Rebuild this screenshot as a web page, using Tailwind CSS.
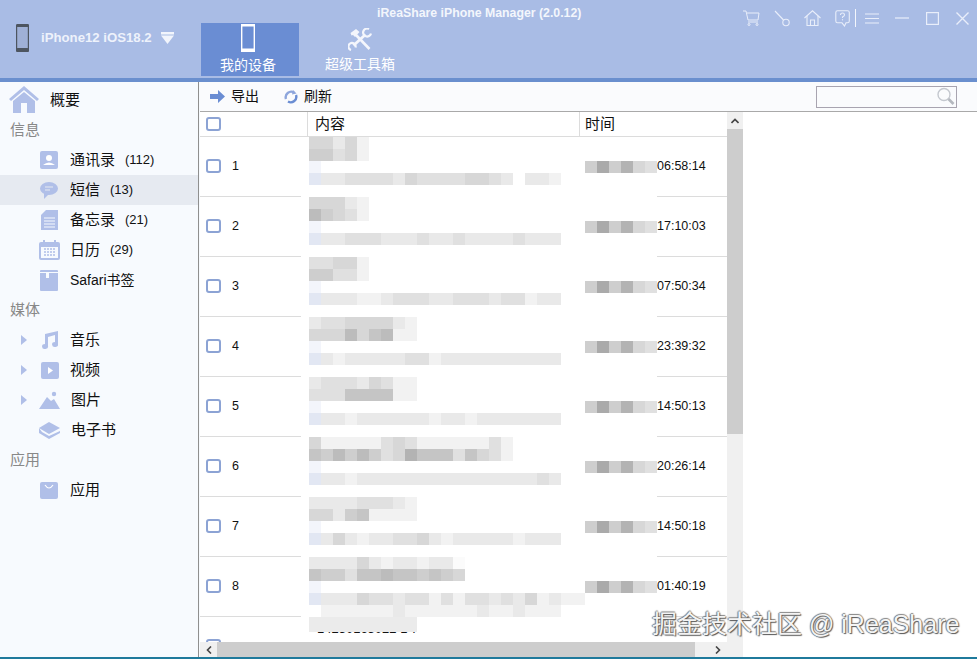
<!DOCTYPE html>
<html lang="zh">
<head>
    <meta charset="UTF-8">
    <meta name="viewport" content="width=device-width, initial-scale=1.0">
    <title>iReaShare iPhone Manager</title>
    <script src="https://cdn.jsdelivr.net/npm/@tailwindcss/browser@4"></script>
</head>
<body class="bg-white">
<div class="relative w-[977px] h-[659px] overflow-hidden flex flex-col bg-white text-[#111] font-['Liberation_Sans','Noto_Sans_CJK_SC',sans-serif]">

    <!-- Top bar -->
    <header class="relative h-[78px] shrink-0 flex bg-[#a9bce5] text-white">
        <div class="w-[201px] flex items-start pt-[24px] pl-[16px]">
            <svg width="13" height="28" viewBox="0 0 13 28"><rect x="0.5" y="0.5" width="12" height="27" rx="2" fill="#9fb0d6" stroke="#4d5560" stroke-width="1.4"/><rect x="0" y="0" width="13" height="3" rx="1.5" fill="#4d5560"/><rect x="0" y="24" width="13" height="4" rx="1.5" fill="#4d5560"/></svg>
            <span class="ml-[12px] mt-[6px] text-[13.2px] leading-4 font-bold text-[#eef2fb] whitespace-nowrap">iPhone12 iOS18.2</span>
            <svg class="ml-[9px] mt-[8px] shrink-0" width="13" height="12" viewBox="0 0 13 12"><rect x="0" y="0" width="13" height="2.5" fill="#f2f5fc"/><polygon points="0,3.5 13,3.5 6.5,12" fill="#f2f5fc"/></svg>
        </div>
        <div class="w-[98px] h-[53px] mt-[23px] bg-[#6a8dd3] flex flex-col items-center pr-[4px]">
            <svg class="mt-[1px]" width="14" height="28" viewBox="0 0 14 28"><rect x="0.7" y="0.7" width="12.6" height="26.6" rx="1.5" fill="none" stroke="#fff" stroke-width="1.4"/><rect x="0" y="0" width="14" height="2.5" fill="#fff"/><rect x="0" y="24.5" width="14" height="3.5" fill="#fff"/></svg>
            <span class="mt-[5px] text-[14px] leading-[16px]">我的设备</span>
        </div>
        <div class="w-[110px] h-[53px] mt-[23px] flex flex-col items-center pl-[12px]">
            <svg class="mt-[5px]" width="24" height="23" viewBox="0 0 24 23" fill="none" stroke="#f4f6fc"><path d="M2.5 5 L8 1 L11.5 4 L7 9 L5 7 L3.5 7.5 Z" fill="#f4f6fc" stroke="none"/><path d="M8 7 L21.5 21" stroke-width="2.6"/><path d="M17.5 6.5 L5.5 17.5" stroke-width="2.8"/><path d="M21 1 A4 4 0 1 0 23 5.5" stroke-width="2.2"/><path d="M3 22 A3.6 3.6 0 1 1 7.5 19.5" stroke-width="2.2"/></svg>
            <span class="mt-[5px] text-[14px] leading-[16px]">超级工具箱</span>
        </div>
        <div class="absolute top-[6px] left-[377px] text-[12.3px] leading-[14px] font-bold text-[#f3f6fc] whitespace-nowrap">iReaShare iPhone Manager (2.0.12)</div>

        <div class="absolute top-[9px] right-[8px] flex items-center h-[18px] text-[#e9eefa]">
            <svg width="17" height="16" viewBox="0 0 17 16" fill="none" stroke="currentColor" stroke-width="1"><path d="M0 1 H3 L5 10 H15 L16 3 H4"/><path d="M5 12 H15"/><circle cx="6" cy="14.5" r="1"/><circle cx="14" cy="14.5" r="1"/></svg>
            <svg class="ml-[14px]" width="17" height="17" viewBox="0 0 17 17" fill="none" stroke="currentColor" stroke-width="1.1"><path d="M1 1 L9.5 10"/><circle cx="12" cy="12.5" r="3.2"/></svg>
            <svg class="ml-[13px]" width="17" height="16" viewBox="0 0 17 16" fill="none" stroke="currentColor" stroke-width="1.1"><path d="M0.5 8 L8.5 0.8 L16.5 8"/><path d="M3 6 V15.5 H14 V6"/><path d="M6.5 15.5 V10 H10.5 V15.5"/></svg>
            <svg class="ml-[14px]" width="15" height="17" viewBox="0 0 15 17" fill="none" stroke="currentColor" stroke-width="1.1"><path d="M2.5 0.8 H12.5 Q14.3 0.8 14.3 2.5 V11 Q14.3 12.8 12.5 12.8 H11 L9.5 16 L7 12.8 H2.5 Q0.8 12.8 0.8 11 V2.5 Q0.8 0.8 2.5 0.8 Z"/><path d="M5.5 5 Q5.5 3 7.5 3 Q9.5 3 9.5 5 Q9.5 6 7.5 7 V8"/><path d="M7.5 9.2 V10.4"/></svg>
            <div class="ml-[5px] w-px h-[18px] bg-[#f3f6fc]"></div>
            <svg class="ml-[9px]" width="14" height="11" viewBox="0 0 14 11" stroke="currentColor" stroke-width="1"><path d="M0 1 H14 M0 5.5 H14 M0 10 H14"/></svg>
            <svg class="ml-[16px]" width="14" height="2" viewBox="0 0 14 2" stroke="currentColor" stroke-width="1.2"><path d="M0 1 H14"/></svg>
            <svg class="ml-[17px]" width="13" height="13" viewBox="0 0 13 13" fill="none" stroke="currentColor" stroke-width="1.2"><rect x="0.6" y="0.6" width="11.8" height="11.8"/></svg>
            <svg class="ml-[17px]" width="13" height="13" viewBox="0 0 13 13" stroke="currentColor" stroke-width="1.4"><path d="M0.5 0.5 L12.5 12.5 M12.5 0.5 L0.5 12.5"/></svg>
        </div>
    </header>
    <div class="h-[4px] shrink-0 bg-[#6a8fce]"></div>

    <div class="flex-1 flex min-h-0">
        <!-- Sidebar -->
        <aside class="w-[200px] shrink-0 bg-[#f7fafe] text-[14px]">
            <div class="w-[199px] h-full border-r border-[#8f8f8f] pt-[3px]">
            <div class="h-[30px] flex items-center pl-[9px]">
                <svg width="30" height="28" viewBox="0 0 30 28" fill="#b0bfe8"><path d="M15 0 L30 13 L28 15 L15 4 L2 15 L0 13 Z"/><path d="M4 15 L15 6 L26 15 V27 H18 V17 H12 V27 H4 Z"/></svg>
                <span class="ml-[11px] text-[15px]">概要</span>
            </div>
            <div class="h-[30px] flex items-center pl-[10px] text-[15px] text-[#888]">信息</div>
            <div class="h-[30px] flex items-center pl-[40px]">
                <svg width="18" height="18" viewBox="0 0 18 18"><rect width="18" height="18" rx="2" fill="#b0bfe8"/><circle cx="9" cy="7" r="3" fill="#fff"/><path d="M3 14 Q9 9 15 14 Z" fill="#fff"/></svg>
                <span class="ml-[12px] text-[15px]">通讯录</span><span class="ml-[10px] text-[13px]">(112)</span>
            </div>
            <div class="h-[30px] flex items-center pl-[40px] bg-[#e6eaf1]">
                <svg width="18" height="18" viewBox="0 0 18 18"><ellipse cx="9" cy="7.5" rx="9" ry="6.5" fill="#b0bfe8"/><path d="M4 12 L4 18 L9 13 Z" fill="#b0bfe8"/><path d="M5 6 H13 M5 9 H10" stroke="#e6eaf1" stroke-width="1"/></svg>
                <span class="ml-[12px] text-[15px]">短信</span><span class="ml-[10px] text-[13px]">(13)</span>
            </div>
            <div class="h-[30px] flex items-center pl-[41px]">
                <svg width="17" height="20" viewBox="0 0 17 20"><path d="M5 0 H17 V20 H0 V5 Z" fill="#b0bfe8"/><path d="M3 8 H14 M3 11 H14 M3 14 H14 M3 17 H14" stroke="#f7fafe" stroke-width="1"/></svg>
                <span class="ml-[12px] text-[15px]">备忘录</span><span class="ml-[10px] text-[13px]">(21)</span>
            </div>
            <div class="h-[30px] flex items-center pl-[39px]">
                <svg width="21" height="20" viewBox="0 0 21 20"><rect y="2" width="21" height="18" rx="2" fill="#b0bfe8"/><rect x="2" y="7" width="17" height="11" fill="#f7fafe"/><rect x="4" y="0" width="2" height="4" fill="#b0bfe8"/><rect x="15" y="0" width="2" height="4" fill="#b0bfe8"/><path d="M5 9 H16 M5 12 H16 M5 15 H16" stroke="#b0bfe8" stroke-width="1.6" stroke-dasharray="2 1"/></svg>
                <span class="ml-[10px] text-[15px]">日历</span><span class="ml-[10px] text-[13px]">(29)</span>
            </div>
            <div class="h-[30px] flex items-center pl-[40px]">
                <svg width="18" height="21" viewBox="0 0 18 21"><rect width="18" height="21" rx="1" fill="#b0bfe8"/><path d="M0 2 H18 V3 H9 V8 H6 V3 H0 Z" fill="#f7fafe"/></svg>
                <span class="ml-[12px] text-[14px]">Safari书签</span>
            </div>
            <div class="h-[30px] flex items-center pl-[10px] text-[15px] text-[#888]">媒体</div>
            <div class="h-[30px] flex items-center pl-[21px]">
                <svg width="6" height="10" viewBox="0 0 6 10"><path d="M0 0 L6 5 L0 10 Z" fill="#b0bfe8"/></svg>
                <svg class="ml-[13px]" width="18" height="18" viewBox="0 0 18 18" fill="#b0bfe8"><path d="M5 3 L18 0 V13 A3 2.5 0 1 1 15 11 V4 L8 6 V15 A3 2.5 0 1 1 5 13 Z"/></svg>
                <span class="ml-[12px] text-[15px]">音乐</span>
            </div>
            <div class="h-[30px] flex items-center pl-[21px]">
                <svg width="6" height="10" viewBox="0 0 6 10"><path d="M0 0 L6 5 L0 10 Z" fill="#b0bfe8"/></svg>
                <svg class="ml-[14px]" width="18" height="17" viewBox="0 0 18 17"><rect width="18" height="17" rx="2" fill="#b0bfe8"/><path d="M7 5 L12 8.5 L7 12 Z" fill="#fff"/></svg>
                <span class="ml-[11px] text-[15px]">视频</span>
            </div>
            <div class="h-[30px] flex items-center pl-[21px]">
                <svg width="6" height="10" viewBox="0 0 6 10"><path d="M0 0 L6 5 L0 10 Z" fill="#b0bfe8"/></svg>
                <svg class="ml-[12px]" width="21" height="18" viewBox="0 0 21 18" fill="#b0bfe8"><circle cx="15" cy="3" r="2.2"/><path d="M0 18 L8 6 L12 10 L15 8 L21 18 Z"/></svg>
                <span class="ml-[11px] text-[15px]">图片</span>
            </div>
            <div class="h-[30px] flex items-center pl-[39px]">
                <svg width="21" height="17" viewBox="0 0 21 17"><path d="M0 6 L10 0 L21 6 L10 12 Z" fill="#b0bfe8"/><path d="M0 6 V11 L10 17 L21 11 V9 L10 14 L3 10 Z" fill="#b0bfe8"/></svg>
                <span class="ml-[11px] text-[15px]">电子书</span>
            </div>
            <div class="h-[30px] flex items-center pl-[10px] text-[15px] text-[#888]">应用</div>
            <div class="h-[30px] flex items-center pl-[40px]">
                <svg width="18" height="17" viewBox="0 0 18 17"><rect width="18" height="17" rx="2" fill="#b0bfe8"/><path d="M5 3 Q9 9 13 3" fill="none" stroke="#fff" stroke-width="1.2"/></svg>
                <span class="ml-[12px] text-[15px]">应用</span>
            </div>
            </div>
        </aside>

        <main class="flex-1 flex flex-col min-w-0">
            <!-- Toolbar -->
            <div class="h-[30px] shrink-0 flex items-center bg-[#fafbfd] border-b border-[#a9a9a9] text-[14px]">
                <svg class="ml-[10px]" width="15" height="13" viewBox="0 0 15 13"><path d="M0 4 H8 V0 L15 6.5 L8 13 V9 H0 Z" fill="#6a8dd3"/></svg>
                <span class="ml-[6px]">导出</span>
                <svg class="ml-[25px]" width="14" height="14" viewBox="0 0 14 14" fill="none" stroke-width="2.4"><path d="M2 9 A5.5 5.5 0 0 1 10 2.5" stroke="#8ea6dc"/><path d="M12 5 A5.5 5.5 0 0 1 4 11.5" stroke="#6a8dd3"/><path d="M9 0 L12.5 3.5 L8 4.5 Z" fill="#8ea6dc" stroke="none"/></svg>
                <span class="ml-[6px]">刷新</span>
                <div class="ml-auto mr-[20px] w-[141px] h-[22px] border border-[#a8a4b0] flex items-center justify-end pr-[1px]">
                    <svg width="19" height="19" viewBox="0 0 19 19" fill="none"><circle cx="8" cy="7.5" r="6" stroke="#c4c8cf" stroke-width="1.4"/><path d="M12.5 12 L17.5 17" stroke="#b4b8bf" stroke-width="2.6"/></svg>
                </div>
            </div>

            <div class="flex-1 flex min-h-0">
                <div class="w-[543px] flex flex-col min-h-0">
                    <div class="flex-1 flex min-h-0">
                        <div class="w-[527px] flex flex-col min-h-0 overflow-hidden">
                            <div class="h-[25px] shrink-0 flex border-b border-[#dcdcdc] text-[15px]">
                                <div class="w-[108px] border-r border-[#dcdcdc] flex items-center pl-[6px]">
                                    <span class="w-[15px] h-[14px] rounded-[3px] border-2 border-[#8ca3d4] bg-white"></span>
                                </div>
                                <div class="w-[272px] border-r border-[#dcdcdc] flex items-center pl-[7px]">内容</div>
                                <div class="flex items-center pl-[5px]">时间</div>
                            </div>
                            <div id="rows" class="flex-1 min-h-0 overflow-hidden"></div>
                        </div>
                        <div class="w-[16px] bg-[#f0f0f0] flex flex-col items-center">
                            <div class="h-[17px] flex items-center justify-center">
                                <svg width="8" height="6" viewBox="0 0 8 6" fill="none" stroke="#444" stroke-width="1.6"><path d="M0.5 5 L4 1.5 L7.5 5"/></svg>
                            </div>
                            <div class="w-full h-[305px] bg-[#cdcdcd]"></div>
                        </div>
                    </div>
                    <div class="h-[15px] shrink-0 bg-[#f0f0f0] flex items-center">
                        <div class="w-[17px] h-full flex items-center justify-center">
                            <svg width="6" height="8" viewBox="0 0 6 8" fill="none" stroke="#444" stroke-width="1.6"><path d="M5 0.5 L1.5 4 L5 7.5"/></svg>
                        </div>
                        <div class="w-[478px] h-full bg-[#cdcdcd]"></div>
                        <div class="ml-[20px]">
                            <svg width="6" height="8" viewBox="0 0 6 8" fill="none" stroke="#444" stroke-width="1.6"><path d="M1 0.5 L4.5 4 L1 7.5"/></svg>
                        </div>
                    </div>
                </div>
                <div class="flex-1 bg-white"></div>
            </div>
        </main>
    </div>
    <div class="h-[2px] shrink-0 bg-[#1f7a9c]"></div>

    <!-- Watermark -->
    <div class="absolute left-[652px] top-[609px] text-[25px] leading-[30px] text-[#f4f4f4] whitespace-nowrap [text-shadow:1px_1px_1px_#555,-1px_0_1px_#777,0_-1px_1px_#888]">掘金技术社区 @ iReaShare</div>
</div>

<script>
    // digit = grey level of one 12px block, b/f = bluish tint, . = nothing
    const messages = [
        { t: '06:58:14', s: '404156', lines: ['55758', '44658', 'f', 'b7766667566665567.778'] },
        { t: '17:10:03', s: '404156', lines: ['55578', '24568', 'f', 'b77666777677677776777'] },
        { t: '07:50:34', s: '404156', lines: ['66558', '44668', 'f', 'b77788766677666766877'] },
        { t: '23:39:32', s: '404156', lines: ['766555578', '555253288', 'f', 'b78777776687777777777'] },
        { t: '14:50:13', s: '404156', lines: ['766675688', '666333388', 'f', 'b77877777787787777777'] },
        { t: '20:26:14', s: '404156', lines: ['58888865688888868', '34242465133363568', 'f', 'b77877777777777777767'] },
        { t: '14:50:18', s: '404156', lines: ['777766678', '557438888', 'f', 'b75787766578777778777'] },
        { t: '01:40:19', s: '404156', lines: ['7777578778779', '3446332334345', 'f', 'b7775667668686676758788', '.88888878888887887888', '666556666788'] },
    ];
    const shade = (c) => {
        if (c === 'b') return '#e2e7f3';
        if (c === 'f') return '#f3f5fb';
        if (c === '.') return 'transparent';
        const v = 170 + Number(c) * 9;
        return `rgb(${v},${v},${v})`;
    };
    const blockRow = (line) => [...line].map(c =>
        `<div class="w-[12px] h-[12px] shrink-0" style="background:${shade(c)}"></div>`).join('');

    const rowsEl = document.getElementById('rows');
    rowsEl.innerHTML = messages.map((m, i) => `
        <div class="h-[60px] flex overflow-hidden">
            <div class="w-[101px] shrink-0 border-b border-[#dcdcdc] flex items-center pl-[6px] text-[12.5px]">
                <span class="w-[15px] h-[14px] rounded-[3px] border-2 border-[#8ca3d4] bg-white mb-[2px]"></span>
                <span class="ml-[11px]">${i + 1}</span>
            </div>
            <div class="w-[356px] shrink-0 flex items-center">
                <div class="ml-[8px] w-[276px] h-full flex flex-col">
                    ${m.lines.map(l => `<div class="flex">${blockRow(l)}</div>`).join('')}
                </div>
                <div class="flex">${blockRow(m.s)}</div>
            </div>
            <div class="flex-1 border-b border-[#dcdcdc] flex items-center pb-[1px] text-[12.5px]">${m.t}</div>
        </div>`).join('') + `
        <div class="h-[25px] flex overflow-hidden">
            <div class="w-[101px] shrink-0 flex items-start pl-[6px] pt-[22px]">
                <span class="w-[15px] h-[14px] shrink-0 rounded-[3px] border-2 border-[#8ca3d4] bg-white"></span>
            </div>
            <div class="ml-[8px] flex flex-col">
                <div class="h-[15px] w-[108px] bg-[#ebebeb]"></div>
                <div class="h-[3px] overflow-hidden pl-[8px] text-[13px] leading-[14px] whitespace-nowrap"><div class="-mt-[10px]">14230165022 1 7</div></div>
            </div>
        </div>`;
</script>
</body>
</html>
